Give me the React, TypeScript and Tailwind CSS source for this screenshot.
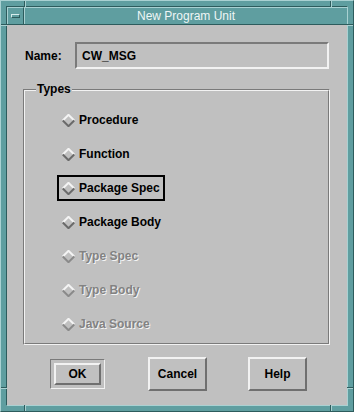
import React from 'react';

const FONT = { fontFamily: '"Liberation Sans", Arial, Helvetica, sans-serif' };

function Diamond({ disabled }: { disabled?: boolean }) {
  const dark = disabled ? '#8a8a8a' : '#6a6a6a';
  return (
    <svg width="13" height="13" viewBox="0 0 13 13" className="shrink-0">
      <polygon points="6.5,0.5 12.5,6.5 6.5,12.5 0.5,6.5" fill="#c0c0c0" />
      <polyline points="0.8,6.5 6.5,0.8 12.2,6.5" fill="none" stroke="#f4f4f4" strokeWidth="2" />
      <polyline points="0.8,6.5 6.5,12.2 12.2,6.5" fill="none" stroke={dark} strokeWidth="2" />
    </svg>
  );
}

const types = [
  { label: 'Procedure', disabled: false },
  { label: 'Function', disabled: false },
  { label: 'Package Spec', disabled: false, focused: true },
  { label: 'Package Body', disabled: false },
  { label: 'Type Spec', disabled: true },
  { label: 'Type Body', disabled: true },
  { label: 'Java Source', disabled: true },
];

function Mark({ className }: { className: string }) {
  return <span className={`absolute ${className}`} />;
}

export default function App() {
  return (
    <div
      style={FONT}
      className="relative flex h-[412px] w-[354px] flex-col border border-t-[#a9d1d2] border-l-[#a9d1d2] border-b-[#2d5c5d] border-r-[#2d5c5d] bg-[#5f9ea0] p-[5px]"
    >
      {/* resize handle marks on the frame */}
      <Mark className="left-[23px] top-0 h-[6px] w-[2px] border-l border-r border-l-[#2d5c5d] border-r-[#a9d1d2]" />
      <Mark className="left-[329px] top-0 h-[6px] w-[2px] border-l border-r border-l-[#2d5c5d] border-r-[#a9d1d2]" />
      <Mark className="bottom-0 left-[23px] h-[6px] w-[2px] border-l border-r border-l-[#2d5c5d] border-r-[#a9d1d2]" />
      <Mark className="bottom-0 left-[329px] h-[6px] w-[2px] border-l border-r border-l-[#2d5c5d] border-r-[#a9d1d2]" />
      <Mark className="left-0 top-[23px] h-[2px] w-[6px] border-t border-b border-t-[#2d5c5d] border-b-[#a9d1d2]" />
      <Mark className="right-0 top-[23px] h-[2px] w-[6px] border-t border-b border-t-[#2d5c5d] border-b-[#a9d1d2]" />
      <Mark className="left-0 top-[386px] h-[2px] w-[6px] border-t border-b border-t-[#2d5c5d] border-b-[#a9d1d2]" />
      <Mark className="right-0 top-[386px] h-[2px] w-[6px] border-t border-b border-t-[#2d5c5d] border-b-[#a9d1d2]" />

      <div className="flex flex-1 flex-col border border-t-[#2d5c5d] border-l-[#2d5c5d] border-b-[#a9d1d2] border-r-[#a9d1d2]">
        {/* title bar */}
        <div className="flex h-[18px] border-b border-b-[#2d5c5d]">
          <div className="flex w-[17px] items-center justify-center border-r border-r-[#2d5c5d] border-t border-t-[#a9d1d2] border-l border-l-[#a9d1d2]">
            <span className="h-[4px] w-[9px] border border-t-[#d6ecec] border-l-[#d6ecec] border-b-[#2d5c5d] border-r-[#2d5c5d]" />
          </div>
          <div className="flex flex-1 items-center justify-center border-t border-l border-t-[#a9d1d2] border-l-[#a9d1d2] text-[12px] leading-none text-[#eef6f6]">
            New Program Unit
          </div>
        </div>

        {/* dialog body */}
        <div className="flex flex-1 flex-col bg-[#c0c0c0] pt-[17px]">
          <div className="flex h-[27px] items-center pl-[18px]">
            <span className="w-[50px] text-[12px] font-bold text-black">Name:</span>
            <div className="flex h-[27px] w-[254px] items-center border-2 border-t-[#7a7a7a] border-l-[#7a7a7a] border-b-[#f2f2f2] border-r-[#f2f2f2] pl-[5px] text-[12px] font-bold text-black">
              CW_MSG
            </div>
          </div>

          <div className="relative ml-[16px] mt-[20px] h-[256px] w-[307px] border border-t-[#7a7a7a] border-l-[#7a7a7a] border-b-[#f2f2f2] border-r-[#f2f2f2]">
            <span className="absolute left-[12px] top-[-9px] bg-[#c0c0c0] px-[1px] text-[12px] font-bold leading-[16px] text-black">
              Types
            </span>
            <div className="flex h-full flex-col items-start gap-[8px] border border-t-[#f2f2f2] border-l-[#f2f2f2] border-b-[#7a7a7a] border-r-[#7a7a7a] pl-[32px] pt-[16px]">
              {types.map((t) => (
                <div
                  key={t.label}
                  className={`flex h-[26px] items-center gap-[4px] border-2 px-[3px] ${
                    t.focused ? 'border-black' : 'border-transparent'
                  }`}
                >
                  <Diamond disabled={t.disabled} />
                  <span
                    className={`text-[12px] font-bold ${
                      t.disabled ? 'text-[#828282] [text-shadow:1px_1px_0_#f4f4f4]' : 'text-black'
                    }`}
                  >
                    {t.label}
                  </span>
                </div>
              ))}
            </div>
          </div>

          <div className="mt-[12px] flex h-[34px] items-center pl-[43px]">
            <div className="flex h-[30px] w-[55px] items-center justify-center border border-t-[#7a7a7a] border-l-[#7a7a7a] border-b-[#f2f2f2] border-r-[#f2f2f2]">
              <button className="flex h-[22px] w-[47px] items-center justify-center border-2 border-t-[#f2f2f2] border-l-[#f2f2f2] border-b-[#6f6f6f] border-r-[#6f6f6f] bg-[#c0c0c0] text-[12px] font-bold text-black">
                OK
              </button>
            </div>
            <button className="ml-[43px] flex h-[34px] w-[59px] items-center justify-center border-2 border-t-[#f2f2f2] border-l-[#f2f2f2] border-b-[#6f6f6f] border-r-[#6f6f6f] bg-[#c0c0c0] text-[12px] font-bold text-black">
              Cancel
            </button>
            <button className="ml-[41px] flex h-[34px] w-[59px] items-center justify-center border-2 border-t-[#f2f2f2] border-l-[#f2f2f2] border-b-[#6f6f6f] border-r-[#6f6f6f] bg-[#c0c0c0] text-[12px] font-bold text-black">
              Help
            </button>
          </div>
        </div>
      </div>
    </div>
  );
}
